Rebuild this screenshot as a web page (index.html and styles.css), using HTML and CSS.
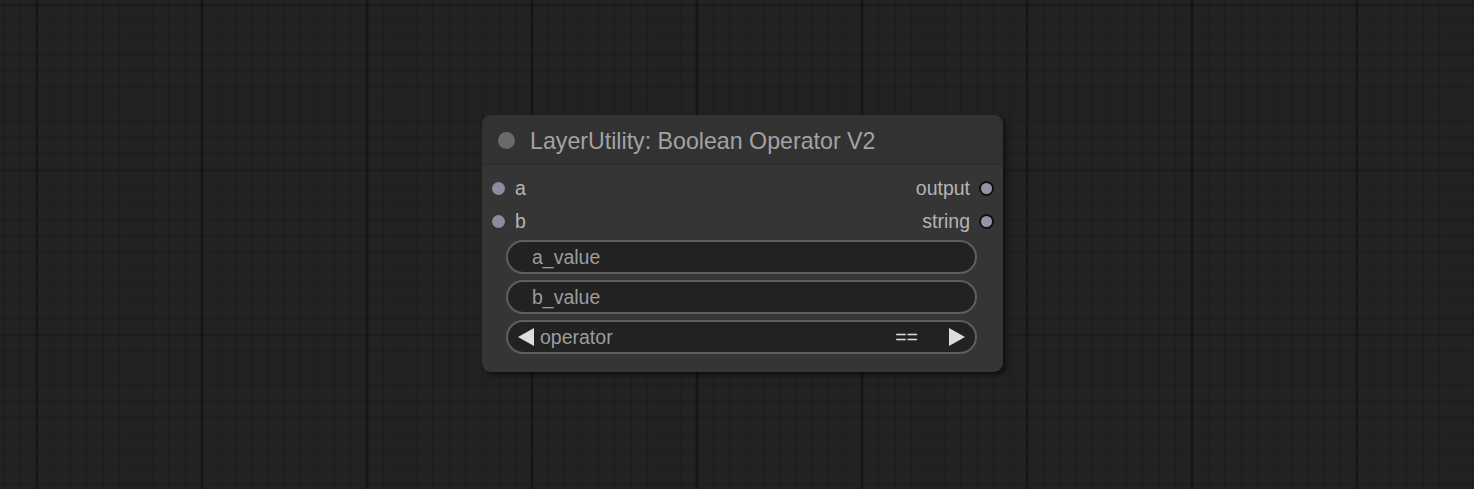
FILE: index.html
```html
<!DOCTYPE html>
<html>
<head>
<meta charset="utf-8">
<link rel="stylesheet" href="styles.css">
</head>
<body>
<div class="canvas">
  <div class="node">
    <div class="title">
      <span class="title-dot"></span>
      <span class="title-text">LayerUtility: Boolean Operator V2</span>
    </div>
    <div class="body">
      <div class="slot-row">
        <div class="slot in"><span class="dot"></span><span class="label">a</span></div>
        <div class="slot out"><span class="label">output</span><span class="dot outlined"></span></div>
      </div>
      <div class="slot-row">
        <div class="slot in"><span class="dot"></span><span class="label">b</span></div>
        <div class="slot out"><span class="label">string</span><span class="dot outlined"></span></div>
      </div>
      <div class="widgets">
        <div class="widget"><span class="wlabel">a_value</span></div>
        <div class="widget"><span class="wlabel">b_value</span></div>
        <div class="widget combo">
          <span class="arrow left"></span>
          <span class="wlabel">operator</span>
          <span class="wvalue">==</span>
          <span class="arrow right"></span>
        </div>
      </div>
    </div>
  </div>
</div>
</body>
</html>
```
FILE: styles.css
```css
html, body {
  margin: 0;
  padding: 0;
  width: 1474px;
  height: 489px;
  overflow: hidden;
  background: #222222;
}
.canvas {
  position: relative;
  width: 1474px;
  height: 489px;
  background-color: #222222;
  background-image:
    linear-gradient(to right, rgba(0,0,0,0.05) 0, rgba(0,0,0,0.28) 1.5px, rgba(0,0,0,0.28) 2.5px, rgba(0,0,0,0.05) 4px, transparent 4px),
    linear-gradient(to bottom, rgba(0,0,0,0.08) 0 3px, transparent 3px),
    linear-gradient(to right, rgba(0,0,0,0.1) 0 1.5px, transparent 1.5px),
    linear-gradient(to bottom, rgba(0,0,0,0.1) 0 1.5px, transparent 1.5px);
  background-size: 165px 165px, 165px 165px, 16.5px 16.5px, 16.5px 16.5px;
  background-position: 35px 4px, 35px 4px, 36px 4px, 36px 4px;
  font-family: "Liberation Sans", Arial, sans-serif;
}
.node {
  position: absolute;
  left: 482px;
  top: 115px;
  width: 521px;
  height: 257px;
  background: #353535;
  border-radius: 9px;
  box-shadow: 3px 3px 5px rgba(0,0,0,0.55);
  display: flex;
  flex-direction: column;
  overflow: hidden;
}
.title {
  height: 49px;
  background: #323232;
  border-bottom: 1px solid #2a2a2a;
  display: flex;
  align-items: center;
  flex-shrink: 0;
}
.title-dot {
  width: 17px;
  height: 17px;
  border-radius: 50%;
  background: #6a6a6a;
  margin-left: 16px;
  margin-right: 15px;
  position: relative;
  top: 1px;
}
.title-text {
  color: #a3a3a3;
  font-size: 23.2px;
  position: relative;
  top: 2px;
}
.body {
  padding-top: 7px;
  display: flex;
  flex-direction: column;
}
.slot-row {
  height: 33px;
  display: flex;
  justify-content: space-between;
  align-items: center;
}
.slot {
  display: flex;
  align-items: center;
  font-size: 19.5px;
  color: #b4b4b4;
}
.slot.in .dot {
  margin-left: 10px;
  margin-right: 10px;
}
.slot.out .dot {
  margin-left: 9px;
  margin-right: 9px;
}
.dot {
  width: 13px;
  height: 13px;
  border-radius: 50%;
  background: #8d8ba0;
  box-sizing: border-box;
}
.dot.outlined {
  width: 15px;
  height: 15px;
  border: 2px solid #111;
  background: #9593a8;
}
.widgets {
  display: flex;
  flex-direction: column;
  gap: 6px;
  margin: 2px 26px 0 24px;
}
.widget {
  height: 34px;
  box-sizing: border-box;
  border: 2px solid #5e5e5e;
  border-radius: 17px;
  background: #222222;
  display: flex;
  align-items: center;
  padding-left: 24px;
  font-size: 19.5px;
  color: #9c9c9c;
}
.widget.combo {
  padding-left: 10px;
  padding-right: 10px;
}
.wlabel {
  flex: 0 0 auto;
}
.wvalue {
  margin-left: auto;
  color: #dddddd;
  margin-right: 31px;
}
.arrow {
  width: 0;
  height: 0;
  border-top: 9px solid transparent;
  border-bottom: 9px solid transparent;
}
.arrow.left {
  border-right: 16px solid #dddddd;
  margin-right: 6px;
}
.arrow.right {
  border-left: 16px solid #dddddd;
}
```
